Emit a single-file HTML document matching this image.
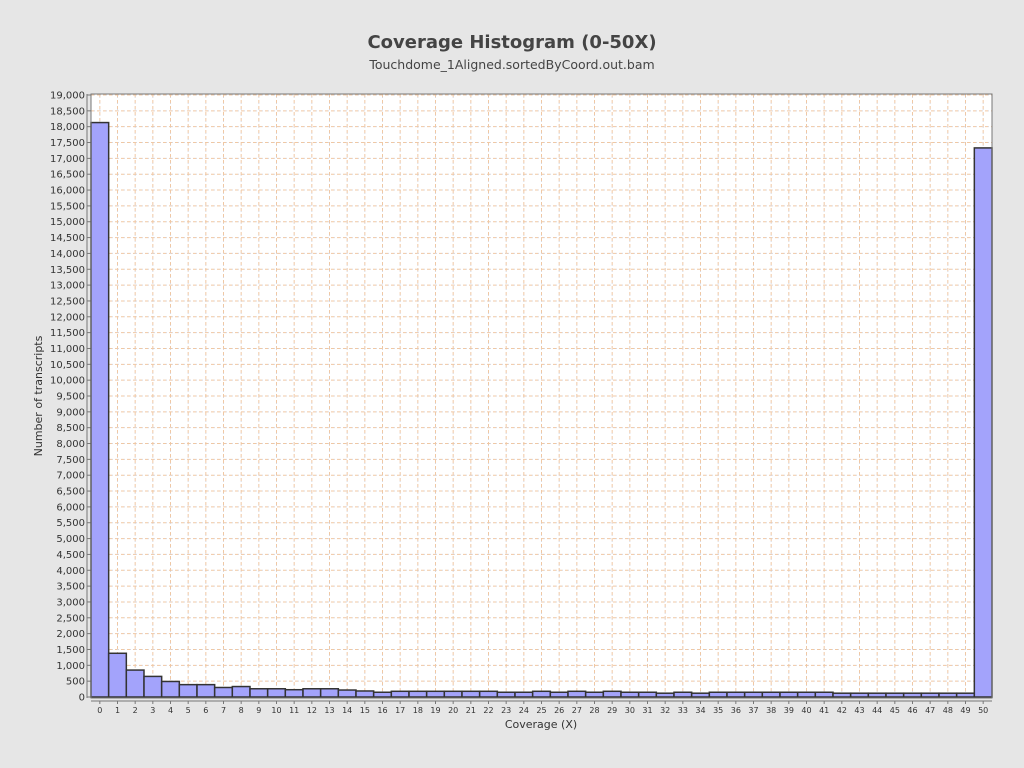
<!DOCTYPE html>
<html><head><meta charset="utf-8"><style>
body{margin:0;background:#e6e6e6;}
svg{display:block;font-family:"DejaVu Sans","Liberation Sans",sans-serif;}
</style></head><body>
<svg width="1024" height="768" viewBox="0 0 1024 768" id="s">
<rect width="1024" height="768" fill="#e6e6e6"/>
<text x="512" y="48" text-anchor="middle" font-size="18" font-weight="bold" fill="#444">Coverage Histogram (0-50X)</text>
<text x="512" y="69" text-anchor="middle" font-size="12.5" fill="#444">Touchdome_1Aligned.sortedByCoord.out.bam</text>
<text transform="translate(42,396) rotate(-90)" text-anchor="middle" font-size="11" fill="#333">Number of transcripts</text>
<text x="541" y="728" text-anchor="middle" font-size="11" fill="#333">Coverage (X)</text>
<rect x="91" y="94" width="901" height="604" fill="#fff"/>
<g id="g"></g>
<rect x="91" y="94" width="901" height="604" fill="none" stroke="#777" stroke-width="1"/>
</svg>
<script>
var ns="http://www.w3.org/2000/svg",g=document.getElementById('g');
function el(t,a,txt){var e=document.createElementNS(ns,t);for(var k in a)e.setAttribute(k,a[k]);if(txt!=null)e.textContent=txt;g.appendChild(e);return e;}
var y0=697,sc=(697-95)/19000,x0=91,bw=901/51;
for(var v=0;v<=19000;v+=500){var y=y0-v*sc;
 if(v>0){el('line',{x1:91,x2:992,y1:y,y2:y,stroke:'#f0c8a4','stroke-dasharray':'3,3'});el('line',{x1:94,x2:992,y1:y,y2:y,stroke:'#d8d8e0','stroke-dasharray':'1,5'});}
 el('line',{x1:87,x2:91,y1:y,y2:y,stroke:'#777'});
 el('text',{x:85,y:y+3.5,'text-anchor':'end','font-size':'10',fill:'#333'},v.toLocaleString('en-US'));}
for(var i=0;i<51;i++){var cx=x0+bw*(i+0.5);
 el('line',{x1:cx,x2:cx,y1:94,y2:698,stroke:'#f0c8a4','stroke-dasharray':'3,3'});
 el('line',{x1:cx,x2:cx,y1:97,y2:698,stroke:'#d8d8e0','stroke-dasharray':'1,5'});}
var vals=[18130,1380,850,650,490,390,390,300,330,260,260,230,260,260,220,190,150,180,180,180,180,180,180,150,150,180,150,180,150,180,150,150,120,150,120,150,150,150,150,150,150,150,120,120,120,120,120,120,120,120,17330];
for(var i=0;i<51;i++){var h=vals[i]*sc,x=x0+bw*i;
 el('rect',{x:x,y:y0-h,width:bw,height:h,fill:'#a3a3fb',stroke:'#333','stroke-width':1.5});
 var cx=x+bw/2;
 el('line',{x1:cx,x2:cx,y1:701,y2:704,stroke:'#777'});
 el('text',{x:cx,y:713,'text-anchor':'middle','font-size':'8',fill:'#333'},String(i));}
el('line',{x1:91,x2:992,y1:701,y2:701,stroke:'#777'});
el('line',{x1:87,x2:87,y1:94,y2:698,stroke:'#777'});
</script>
</body></html>
